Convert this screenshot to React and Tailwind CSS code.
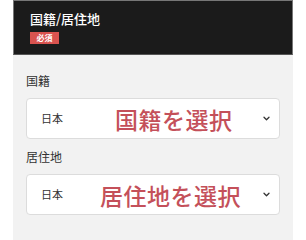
import React from 'react';

const Chevron = () => (
  <svg width="7" height="5" viewBox="0 0 7 5" fill="none" stroke="#333" strokeWidth="1.3" strokeLinecap="round" strokeLinejoin="round">
    <path d="M1 1.2 L3.5 3.7 L6 1.2" />
  </svg>
);

const SelectField = ({ label, value, note, noteLeft }) => (
  <div className="flex flex-col">
    <div className="h-[18px] text-[12px] leading-[18px] text-[#333]">{label}</div>
    <div className="relative mt-[8px] h-[41px] flex items-center justify-between bg-white border border-[#dcdcdc] rounded-[4px] pl-[14px] pr-[9px]">
      <span className="text-[11px] text-[#333]">{value}</span>
      <Chevron />
      <span
        className={`absolute top-1/2 -translate-y-1/2 ${noteLeft} text-[23px] leading-none font-medium text-[#c4505a] tracking-[0.5px] whitespace-nowrap`}
      >
        {note}
      </span>
    </div>
  </div>
);

export default function App() {
  return (
    <div
      className="w-[306px] h-[240px] bg-white overflow-hidden"
      style={{ fontFamily: '"Noto Sans CJK JP", "Noto Sans", sans-serif' }}
    >
      <div className="ml-[13px] w-[280px] h-full flex flex-col">
        {/* Header */}
        <div className="h-[55px] bg-[#1b1b1b] border border-[#777] border-b-[#555] pl-[16px] pt-[9px] flex flex-col">
          <div className="text-[13px] leading-[18px] font-medium text-white">国籍/居住地</div>
          <div className="mt-[4px] w-[29px] h-[12px] bg-[#d9534f] flex items-center justify-center text-[8px] font-bold text-white leading-none">
            必須
          </div>
        </div>

        {/* Body */}
        <div className="flex-1 bg-[#f2f2f2] pt-[17px] px-[13px] flex flex-col gap-[9px]">
          <SelectField label="国籍" value="日本" note="国籍を選択" noteLeft="left-[88px]" />
          <SelectField label="居住地" value="日本" note="居住地を選択" noteLeft="left-[73px]" />
        </div>
      </div>
    </div>
  );
}
